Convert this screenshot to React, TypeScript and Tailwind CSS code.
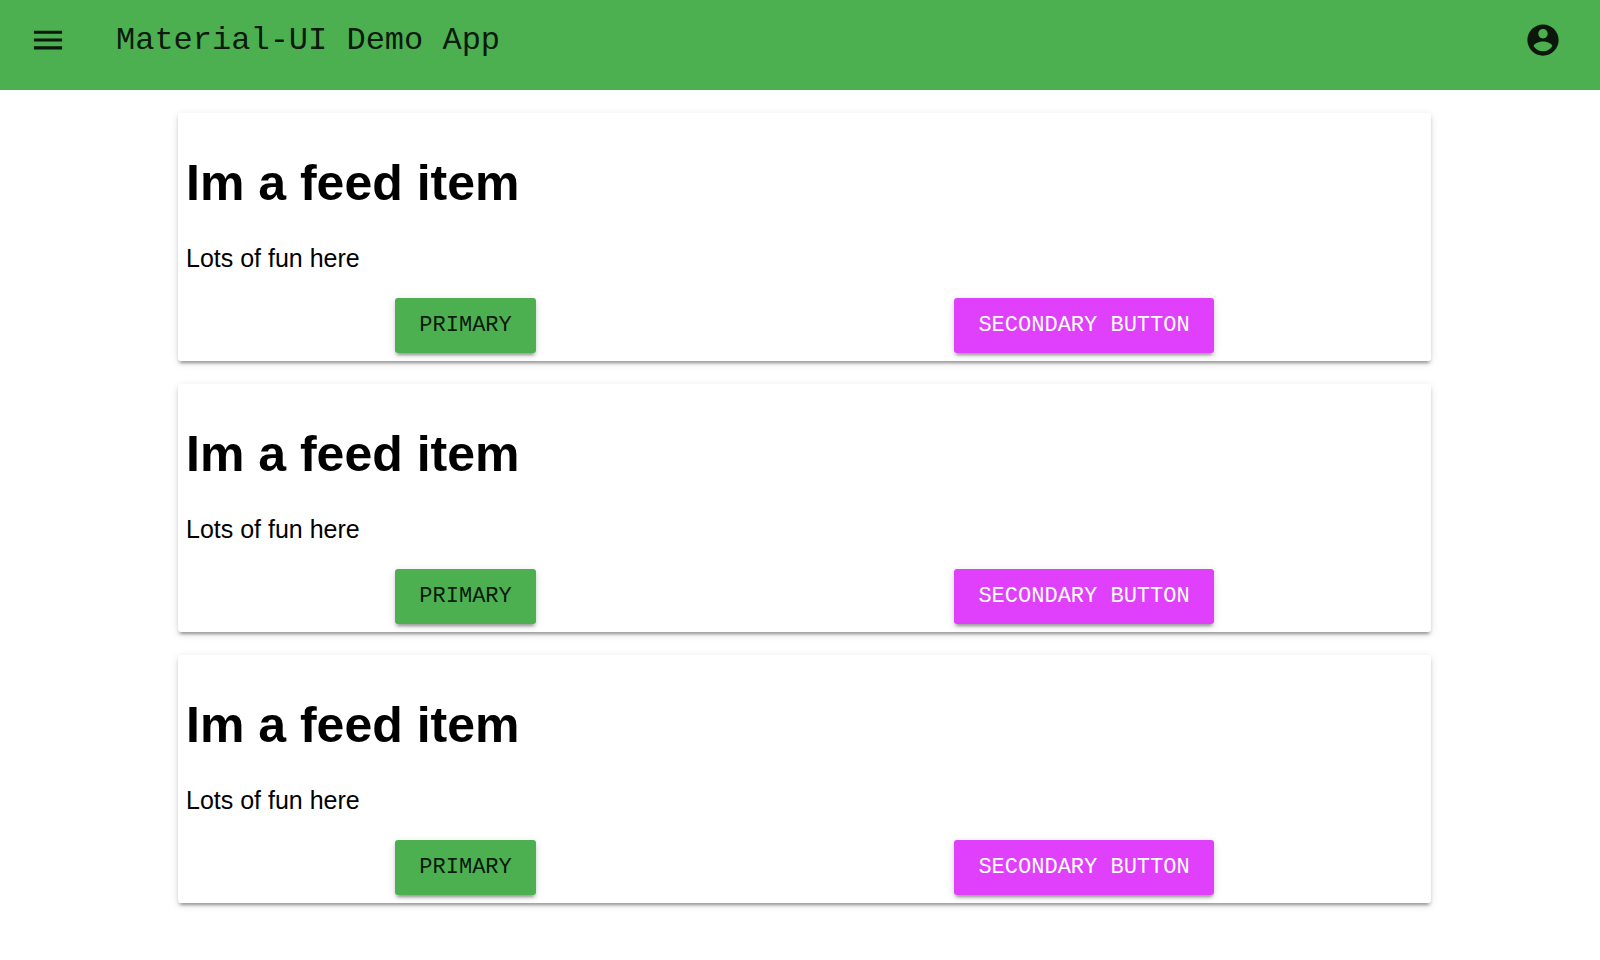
import type { ReactNode } from "react";

function Icon({ path }: { path: string }) {
  return (
    <svg viewBox="-0.16 -0.16 24.32 24.32" className="size-[38px] fill-current" aria-hidden="true">
      <path d={path} />
    </svg>
  );
}

const MENU = "M3 18h18v-2H3v2zm0-5h18v-2H3v2zm0-7v2h18V6H3z";
const ACCOUNT =
  "M12 2C6.48 2 2 6.48 2 12s4.48 10 10 10 10-4.48 10-10S17.52 2 12 2zm0 3c1.66 0 3 1.34 3 3s-1.34 3-3 3-3-1.34-3-3 1.34-3 3-3zm0 14.2c-2.5 0-4.71-1.28-6-3.22.03-1.99 4-3.08 6-3.08 1.99 0 5.97 1.09 6 3.08-1.29 1.94-3.5 3.22-6 3.22z";

function FeedButton({ tone, children }: { tone: string; children: ReactNode }) {
  return (
    <button
      type="button"
      className={`h-[55px] rounded-[3px] px-6 font-['Liberation_Mono',monospace] text-[22px] uppercase shadow-[0_5px_2px_-3px_rgba(0,0,0,0.2),0_3px_3px_rgba(0,0,0,0.14),0_2px_8px_rgba(0,0,0,0.12)] ${tone}`}
    >
      {children}
    </button>
  );
}

function FeedItem() {
  return (
    <article className="rounded-[3px] bg-white p-2 shadow-[0_5px_2px_-3px_rgba(0,0,0,0.2),0_3px_3px_rgba(0,0,0,0.14),0_2px_8px_rgba(0,0,0,0.12)]">
      <h2 className="pt-[34px] pb-8 text-[50px] leading-[57px] font-bold">Im a feed item</h2>
      <p className="mb-[26px] text-[25px] leading-7">Lots of fun here</p>
      <div className="flex justify-around">
        <FeedButton tone="bg-[#4caf50] text-black/87">Primary</FeedButton>
        <FeedButton tone="bg-[#e040fb] text-white">Secondary Button</FeedButton>
      </div>
    </article>
  );
}

export default function App() {
  return (
    <div className="min-h-screen bg-white font-['Liberation_Sans',sans-serif] text-black">
      <header className="flex h-[90px] items-center bg-[#4caf50] pr-[38px] pb-2.5 pl-[29px] text-black/87">
        <button type="button" aria-label="Menu">
          <Icon path={MENU} />
        </button>
        <h1 className="ml-[49px] grow pt-0.5 font-['Liberation_Mono',monospace] text-[32px] leading-9">
          Material-UI Demo App
        </h1>
        <button type="button" aria-label="Account">
          <Icon path={ACCOUNT} />
        </button>
      </header>
      <main className="flex flex-col gap-[23px] pt-[23px] pr-[169px] pl-[178px]">
        <FeedItem />
        <FeedItem />
        <FeedItem />
      </main>
    </div>
  );
}
